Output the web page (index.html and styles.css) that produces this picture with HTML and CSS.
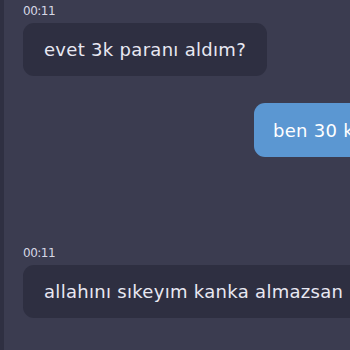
FILE: index.html
```html
<!DOCTYPE html>
<html lang="tr">
<head>
  <meta charset="UTF-8" />
  <meta name="viewport" content="width=device-width, initial-scale=1.0"/>
  <title>Sohbet</title>
  <link rel="stylesheet" href="styles.css">
</head>
<body>
  <div class="chat">
    <div class="rail"></div>

    <div class="messages">
      <!-- gelen mesaj -->
      <div class="msg incoming">
        <div class="time">00:11</div>
        <div class="bubble">evet 3k paranı aldım?</div>
      </div>

      <!-- giden mesaj -->
      <div class="msg outgoing">
        <div class="bubble">ben 30 k dedim</div>
      </div>

      <div class="msg incoming last">
        <div class="time">00:11</div>
        <div class="bubble">allahını sıkeyım kanka almazsan</div>
      </div>
    </div>
  </div>
</body>
</html>
```

FILE: styles.css
```css
body {
  margin: 0;
  padding: 0;
  background: #3b3c50;
  overflow: hidden;
  height: 100vh;
  font-family: 'DejaVu Sans', 'Noto Sans', sans-serif;
  color: #e8e8f2;
}

.chat {
  display: flex;
  height: 100%;
}

.rail {
  width: 4px;
  flex: none;
  background: #2f3042;
}

.messages {
  display: flex;
  flex-direction: column;
  padding: 3px 0 0 19px;
  width: 560px;
  flex: none;
}

.msg {
  display: flex;
  flex-direction: column;
  align-items: flex-start;
}

.time {
  font-size: 12px;
  line-height: 16px;
  color: #d6d7e4;
  margin-bottom: 4px;
  letter-spacing: -0.5px;
}

.bubble {
  font-size: 18px;
  line-height: 25px;
  letter-spacing: 0.3px;
  padding: 14px 21px;
  border-radius: 11px;
  background: #2e2f41;
  white-space: nowrap;
}

.outgoing {
  margin-top: 27px;
  padding-left: 231px;
}

.outgoing .bubble {
  background: #5b97d2;
  color: #fff;
  padding: 15px 19px 14px;
}

.last {
  margin-top: 88px;
}
```
